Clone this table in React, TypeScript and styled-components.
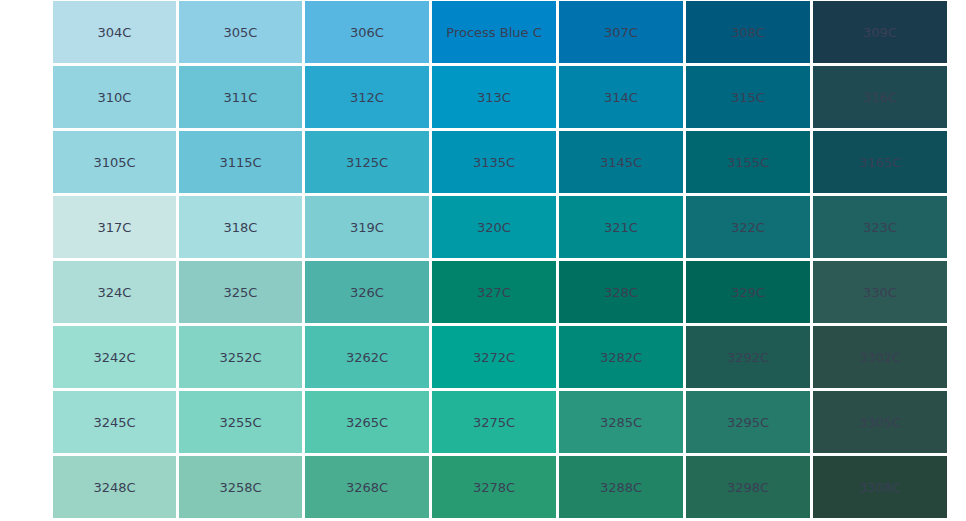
import styled, { createGlobalStyle } from "styled-components";

const GlobalStyle = createGlobalStyle`
  html, body {
    margin: 0;
    padding: 0;
    background: #fff;
  }
`;

const Page = styled.div`
  padding: 1px 0 0 53px;
`;

const Grid = styled.div`
  display: grid;
  grid-template-columns: 123px 123px 124px 124px 124px 124px 134px;
  grid-auto-rows: 62px;
  gap: 3px;
`;

const Swatch = styled.div<{ $bg: string }>`
  display: flex;
  align-items: center;
  justify-content: center;
  background: ${(p) => p.$bg};
  color: #3a3f55;
  font-family: "DejaVu Sans", Verdana, sans-serif;
  font-size: 13px;
  white-space: nowrap;
`;

const rows: [string, string][][] = [
  [["304C", "#b5dce9"], ["305C", "#8fcfe6"], ["306C", "#57b7e1"], ["Process Blue C", "#0085c8"], ["307C", "#0072ae"], ["308C", "#00597c"], ["309C", "#1a3b4c"]],
  [["310C", "#93d4e0"], ["311C", "#6bc3d6"], ["312C", "#29a8cf"], ["313C", "#0097c4"], ["314C", "#0084a9"], ["315C", "#006780"], ["316C", "#204a52"]],
  [["3105C", "#95d5e0"], ["3115C", "#6ac3d6"], ["3125C", "#33afc8"], ["3135C", "#0093b5"], ["3145C", "#007890"], ["3155C", "#00666f"], ["3165C", "#0e4f5a"]],
  [["317C", "#c9e6e4"], ["318C", "#a6dde0"], ["319C", "#7ecdd2"], ["320C", "#009aa6"], ["321C", "#008b8e"], ["322C", "#0f6f74"], ["323C", "#206262"]],
  [["324C", "#aedcd6"], ["325C", "#8ccbc4"], ["326C", "#4fb2a8"], ["327C", "#00836a"], ["328C", "#007060"], ["329C", "#006556"], ["330C", "#2e5a56"]],
  [["3242C", "#9addd1"], ["3252C", "#84d4c5"], ["3262C", "#4bbfb0"], ["3272C", "#00a493"], ["3282C", "#008878"], ["3292C", "#1f5b52"], ["3302C", "#2c4e48"]],
  [["3245C", "#9bdcd3"], ["3255C", "#7dd4c2"], ["3265C", "#54c7ae"], ["3275C", "#22b499"], ["3285C", "#2b967e"], ["3295C", "#257a6a"], ["3305C", "#2b4e48"]],
  [["3248C", "#9bd4c4"], ["3258C", "#82c8b4"], ["3268C", "#4aad8f"], ["3278C", "#289b73"], ["3288C", "#218465"], ["3298C", "#256a55"], ["3308C", "#26463c"]],
];

export default function App() {
  return (
    <>
      <GlobalStyle />
      <Page>
        <Grid>
          {rows.flat().map(([name, bg]) => (
            <Swatch key={name} $bg={bg}>
              {name}
            </Swatch>
          ))}
        </Grid>
      </Page>
    </>
  );
}
